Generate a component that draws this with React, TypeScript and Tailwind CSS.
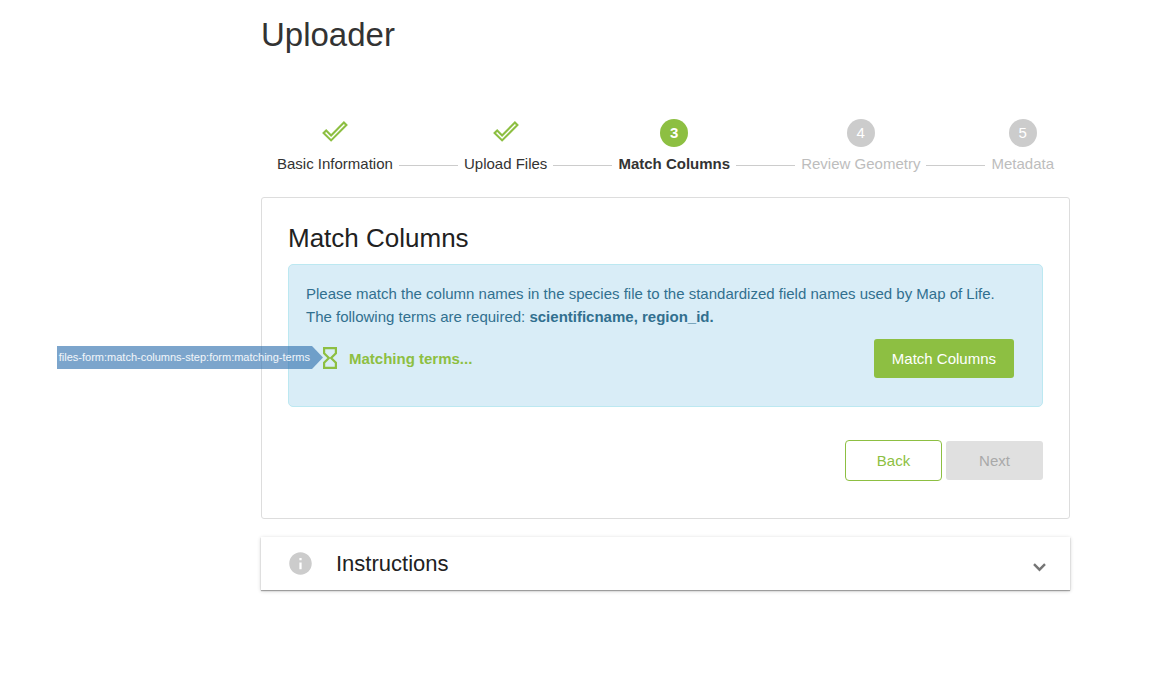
import React from "react";

type StepState = "done" | "current" | "upcoming";

const steps: { label: string; state: StepState }[] = [
  { label: "Basic Information", state: "done" },
  { label: "Upload Files", state: "done" },
  { label: "Match Columns", state: "current" },
  { label: "Review Geometry", state: "upcoming" },
  { label: "Metadata", state: "upcoming" },
];

const labelStyles: Record<StepState, string> = {
  done: "text-[#333333]",
  current: "font-bold text-[#333333]",
  upcoming: "text-[#bdbdbd]",
};

const badgeStyles: Record<StepState, string> = {
  done: "pb-[2px] text-[#8dbf42]",
  current: "rounded-full bg-[#8dbf42] font-bold text-white",
  upcoming: "rounded-full bg-[#cccccc] text-white",
};

function CheckIcon() {
  return (
    <svg viewBox="0 0 26 22" className="h-[22px] w-[26px]" fill="none" stroke="currentColor" strokeWidth="2.1" aria-hidden="true">
      <path d="M1.6 12.1 4.2 9.5 9.1 14.4 21.9 1.6 24.4 4.1 9.1 19.4Z" />
    </svg>
  );
}

function HourglassIcon() {
  return (
    <svg viewBox="0 0 14 22" className="h-[22px] w-[14px]" fill="none" stroke="#8dbf42" strokeWidth="2.2" aria-hidden="true">
      <path d="M1.1 1.1H12.9V6.2L8.1 11 12.9 15.8V20.9H1.1V15.8L5.9 11 1.1 6.2Z" />
    </svg>
  );
}

function InfoIcon() {
  return (
    <svg viewBox="0 0 24 24" className="size-[27px]" fill="#cccccc" aria-hidden="true">
      <path d="M12 2C6.48 2 2 6.48 2 12s4.48 10 10 10 10-4.48 10-10S17.52 2 12 2zm1 15h-2v-6h2v6zm0-8h-2V7h2v2z" />
    </svg>
  );
}

function Stepper() {
  return (
    <ol className="flex items-end gap-[6px] px-4">
      {steps.map((step, i) => (
        <React.Fragment key={step.label}>
          {i > 0 && <li aria-hidden="true" className="mb-[9px] h-px flex-1 bg-[#cccccc]" />}
          <li className="flex flex-col items-center gap-[6px]" aria-current={step.state === "current" ? "step" : undefined}>
            <span className={`flex size-7 items-center justify-center ${badgeStyles[step.state]}`}>
              {step.state === "done" ? <CheckIcon /> : i + 1}
            </span>
            <span className={`whitespace-nowrap leading-[22px] ${labelStyles[step.state]}`}>{step.label}</span>
          </li>
        </React.Fragment>
      ))}
    </ol>
  );
}

export default function App() {
  return (
    <main className="min-h-screen bg-white pb-6 pl-[261px] pr-[106px] pt-[15px] font-['Liberation_Sans',Arial,sans-serif] text-[15px]">
      <h1 className="text-[33px] leading-10 text-[#333333]">Uploader</h1>

      <div className="mt-16">
        <Stepper />
      </div>

      <section className="mt-[22px] rounded-[3px] border border-[#dddddd] px-[26px] pb-[37px] pt-6">
        <h2 className="text-[26px] leading-8 text-[#212121]">Match Columns</h2>

        <div className="mt-[10px] rounded-[5px] border border-[#bce8f1] bg-[#d9edf7] pb-7 pl-[17px] pr-7 pt-[17px] text-[#31708f]">
          <p className="leading-[23px]">
            Please match the column names in the species file to the standardized field names used by Map of Life.
            <br />
            The following terms are required: <strong>scientificname, region_id.</strong>
          </p>
          <div className="mt-[11px] flex items-center justify-between">
            <div className="relative ml-[17px] flex items-center gap-3 pb-[2px]">
              <div className="absolute right-full flex h-[23px] items-stretch">
                <span className="whitespace-nowrap bg-[#3674b0]/65 px-[2px] text-[11px] leading-[23px] text-white/90">
                  files-form:match-columns-step:form:matching-terms
                </span>
                <svg viewBox="0 0 11 23" className="h-[23px] w-[11px]" fill="#3674b0" fillOpacity="0.65" aria-hidden="true">
                  <path d="M0 0 11 11.5 0 23Z" />
                </svg>
              </div>
              <HourglassIcon />
              <strong className="pt-[2px] leading-5 text-[#8dbf42]">Matching terms...</strong>
            </div>
            <button type="button" className="h-[39px] rounded-[3px] bg-[#8dbf42] px-[18px] pt-px text-white">
              Match Columns
            </button>
          </div>
        </div>

        <div className="mt-[33px] flex items-center justify-end gap-1">
          <button type="button" className="h-[41px] w-[97px] rounded-[4px] border border-[#8dbf42] pt-px text-[#8dbf42]">
            Back
          </button>
          <button type="button" disabled className="h-[39px] w-[97px] rounded-[3px] bg-[#e0e0e0] pt-px text-[#a9a9a9]">
            Next
          </button>
        </div>
      </section>

      <section className="mt-[18px] shadow-[0_1px_1px_rgba(0,0,0,0.3),0_1px_4px_rgba(0,0,0,0.2)]">
        <button type="button" aria-expanded="false" className="flex h-[53px] w-full items-center bg-white pl-[26px] pr-6 text-left">
          <InfoIcon />
          <span className="ml-[22px] flex-1 text-[22px] text-[#212121]">Instructions</span>
          <svg viewBox="0 0 13 9" className="mt-[7px] h-[9px] w-[13px]" fill="none" stroke="#757575" strokeWidth="2.4" aria-hidden="true">
            <path d="M1 1.2 6.5 6.7 12 1.2" />
          </svg>
        </button>
      </section>
    </main>
  );
}
